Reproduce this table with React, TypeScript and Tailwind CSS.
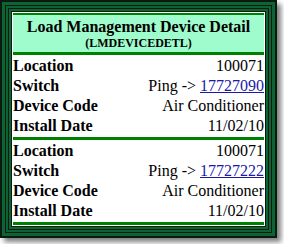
import React from 'react'

type Device = {
  location: string
  switchId: string
  deviceCode: string
  installDate: string
}

const devices: Device[] = [
  { location: '100071', switchId: '17727090', deviceCode: 'Air Conditioner', installDate: '11/02/10' },
  { location: '100071', switchId: '17727222', deviceCode: 'Air Conditioner', installDate: '11/02/10' },
]

const serif = "font-['Liberation_Serif','Times_New_Roman',serif]"

function Row({ label, children }: { label: string; children: React.ReactNode }) {
  return (
    <div className="flex items-center justify-between h-5 leading-5 text-[16px]">
      <span className={`${serif} font-bold text-black`}>{label}</span>
      <span className={`${serif} text-black`}>{children}</span>
    </div>
  )
}

export default function App() {
  return (
    <div className={`bg-white w-[284px] h-[244px] ${serif}`}>
      {/* striped frame */}
      <div className="w-[277px] border-2 border-[#0a1a10] shadow-[4px_4px_5px_rgba(0,0,0,0.5)]">
        <div className="border-[3px] border-[#0c6434]">
          <div className="border border-[#0a1a10]">
            <div className="border-2 border-[#0c6434]">
              <div className="border border-[#0a1a10]">
                <div className="border-2 border-[#0c6434]">
                  <div className="border border-[#0a1a10]">
                    <div className="bg-white p-px">
                      {/* title block */}
                      <div className="bg-[#9ffccc] border-t-2 border-b-[3px] border-[#008000] pt-[3px] pb-[2px] text-center text-black font-bold">
                        <div className={`${serif} text-[16px] leading-[18px]`}>Load Management Device Detail</div>
                        <div className={`${serif} text-[12px] leading-[14px]`}>(LMDEVICEDETL)</div>
                      </div>
                      {devices.map((d, i) => (
                        <div key={i}>
                          <div className="pt-px">
                            <Row label="Location">{d.location}</Row>
                            <Row label="Switch">
                              Ping -&gt;{' '}
                              <a href="#" className="text-[#1a1aa6] underline">{d.switchId}</a>
                            </Row>
                            <Row label="Device Code">{d.deviceCode}</Row>
                            <Row label="Install Date">{d.installDate}</Row>
                          </div>
                          <div className="mt-px h-[3px] bg-[#008000]" />
                        </div>
                      ))}
                    </div>
                  </div>
                </div>
              </div>
            </div>
          </div>
        </div>
      </div>
    </div>
  )
}
